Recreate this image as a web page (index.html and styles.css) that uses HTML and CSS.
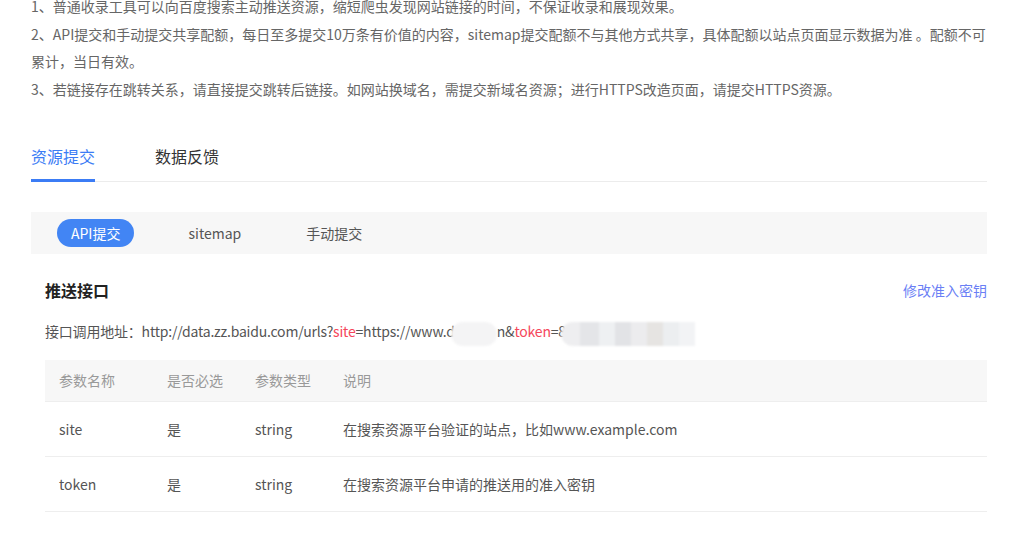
FILE: index.html
```html
<!DOCTYPE html>
<html lang="zh-CN">
<head>
  <meta charset="UTF-8" />
  <meta name="viewport" content="width=device-width, initial-scale=1.0"/>
  <title>普通收录 - 资源提交</title>
  <link rel="stylesheet" href="styles.css">
</head>
<body>
  <div class="page">
    <div class="notes">
      <p>1、普通收录工具可以向百度搜索主动推送资源，缩短爬虫发现网站链接的时间，不保证收录和展现效果。</p>
      <p>2、API提交和手动提交共享配额，每日至多提交10万条有价值的内容，sitemap提交配额不与其他方式共享，具体配额以站点页面显示数据为准 。配额不可累计，当日有效。</p>
      <p>3、若链接存在跳转关系，请直接提交跳转后链接。如网站换域名，需提交新域名资源；进行HTTPS改造页面，请提交HTTPS资源。</p>
    </div>

    <div class="tabs">
      <span class="tab active">资源提交</span>
      <span class="tab">数据反馈</span>
    </div>

    <div class="sub-tabs">
      <span class="sub-tab active">API提交</span>
      <span class="sub-tab">sitemap</span>
      <span class="sub-tab">手动提交</span>
    </div>

    <div class="panel">
      <div class="panel-head">
        <h2>推送接口</h2>
        <a class="link" href="#">修改准入密钥</a>
      </div>

      <p class="api-url">接口调用地址：http://data.zz.baidu.com/urls?<span class="key">site</span>=https://www.d<span class="mask mask-light"></span>n&amp;<span class="key">token</span>=8<span class="mask mask-grid"></span></p>

      <table class="params">
        <thead>
          <tr>
            <th class="col-name">参数名称</th>
            <th class="col-req">是否必选</th>
            <th class="col-type">参数类型</th>
            <th>说明</th>
          </tr>
        </thead>
        <tbody>
          <tr>
            <td>site</td>
            <td>是</td>
            <td>string</td>
            <td>在搜索资源平台验证的站点，比如www.example.com</td>
          </tr>
          <tr>
            <td>token</td>
            <td>是</td>
            <td>string</td>
            <td>在搜索资源平台申请的推送用的准入密钥</td>
          </tr>
        </tbody>
      </table>
    </div>
  </div>
</body>
</html>
```

FILE: styles.css
```css
body {
  margin: 0;
  font-family: "Microsoft YaHei", "Noto Sans CJK SC", sans-serif;
  font-size: 14px;
  color: #333;
  background: #fff;
}

.page {
  width: 956px;
  padding: 0 41px 0 31px;
}

/* 顶部说明 */
.notes {
  margin-top: -7px;
  color: #666;
  line-height: 27.6px;
}

.notes p {
  margin: 0;
}

/* 一级标签 */
.tabs {
  display: flex;
  gap: 60px;
  margin-top: 40px;
  border-bottom: 1px solid #ececec;
}

.tab {
  font-size: 16px;
  line-height: 22px;
  padding: 2px 0 12px;
  color: #333;
  border-bottom: 3px solid transparent;
  margin-bottom: -1px;
}

.tab.active {
  color: #3b7cf5;
  border-bottom-color: #3b7cf5;
}

/* 二级标签 */
.sub-tabs {
  display: flex;
  align-items: center;
  margin-top: 30px;
  height: 42px;
  background: #f7f7f7;
  padding-left: 26px;
}

.sub-tab {
  color: #555;
  line-height: 28px;
  margin-right: 65px;
}

.sub-tab.active {
  background: #4285f4;
  color: #fff;
  border-radius: 14px;
  padding: 0 14px;
  margin-right: 54px;
}

/* 推送接口 */
.panel {
  padding-left: 14px;
}

.panel-head {
  display: flex;
  justify-content: space-between;
  align-items: center;
  margin-top: 25px;
}

.panel-head h2 {
  margin: 0;
  font-size: 16px;
  font-weight: bold;
  color: #222;
  line-height: 22px;
}

.link {
  color: #6b7ff5;
  text-decoration: none;
}

.api-url {
  margin: 19px 0 0;
  color: #555;
  line-height: 22px;
  letter-spacing: -0.2px;
}

.key {
  color: #f5475b;
}

/* 打码部分 */
.mask {
  display: inline-block;
  height: 24px;
  vertical-align: middle;
  filter: blur(1px);
}

.mask-light {
  width: 46px;
  margin-left: -4px;
  background: #f4f4f5;
  border-radius: 12px;
}

.mask-grid {
  width: 134px;
  margin-left: -5px;
  border-radius: 12px 0 0 12px;
  background: linear-gradient(90deg, #eeeef0 0 14%, #e4e5e8 14% 28%, #eef0f2 28% 40%, #e2e3e6 40% 52%, #ececee 52% 64%, #e6e4e2 64% 76%, #eceef0 76% 88%, #f2f3f5 88%);
}

/* 参数表 */
.params {
  width: 100%;
  margin-top: 14px;
  border-collapse: collapse;
}

.params th {
  background: #f7f7f7;
  color: #999;
  font-weight: normal;
  text-align: left;
  height: 41px;
  padding: 0 0 0 14px;
}

.params td {
  height: 54px;
  padding: 0 0 0 14px;
  color: #555;
  border-top: 1px solid #eee;
  border-bottom: 1px solid #eee;
}

.params .col-name {
  width: 94px;
}

.params .col-req {
  width: 74px;
}

.params .col-type {
  width: 74px;
}
```
